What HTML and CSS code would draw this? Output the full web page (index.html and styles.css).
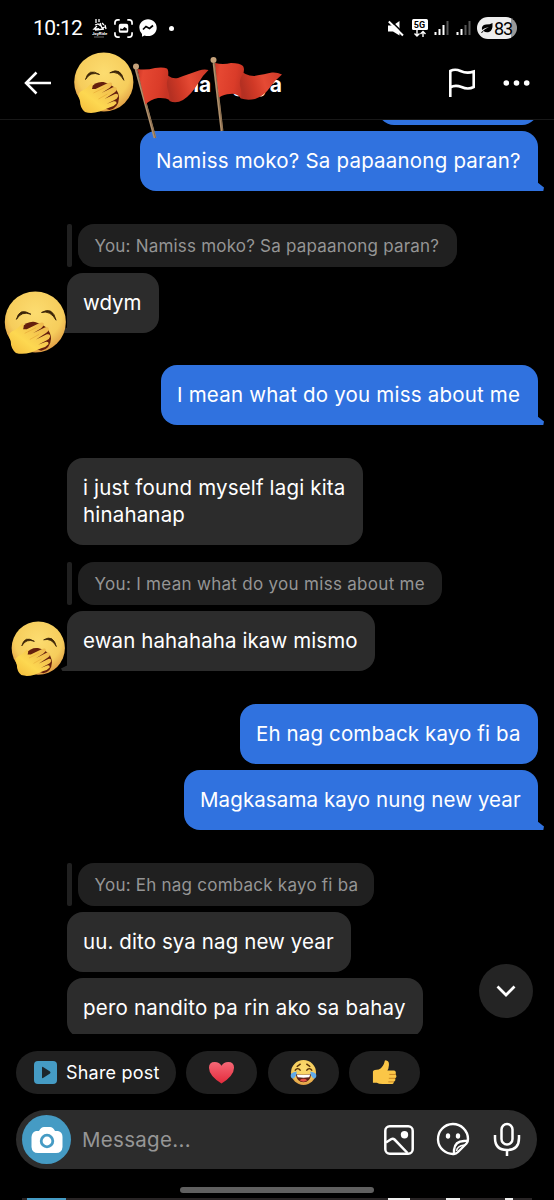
FILE: index.html
```html
<!DOCTYPE html>
<html lang="tl">
<head>
<meta charset="utf-8">
<title>Messages</title>
<link rel="stylesheet" href="styles.css">
</head>
<body>
<svg class="defs" width="0" height="0">
  <defs>
    <radialGradient id="skin" cx=".5" cy=".35" r=".68"><stop offset="0" stop-color="#fcdc70"/><stop offset=".65" stop-color="#f6cd5c"/><stop offset="1" stop-color="#dc9440"/></radialGradient>
    <linearGradient id="hand" x1="0" y1="1" x2="1" y2="0"><stop offset="0" stop-color="#f3ba3a"/><stop offset=".4" stop-color="#fdd851"/><stop offset="1" stop-color="#ecb34d"/></linearGradient>
    <linearGradient id="cloth" x2="1" y2=".2"><stop offset="0" stop-color="#c93524"/><stop offset=".2" stop-color="#e64832"/><stop offset=".75" stop-color="#da3c29"/><stop offset="1" stop-color="#c73424"/></linearGradient>
    <linearGradient id="fold" x2="1" y2="-.2"><stop offset="0" stop-color="#b53022"/><stop offset=".25" stop-color="#d03926"/><stop offset=".5" stop-color="#e54a34"/><stop offset="1" stop-color="#c93525"/></linearGradient>
    <linearGradient id="heart" x1="0" y1="0" x2="0" y2="1"><stop offset="0" stop-color="#f56876"/><stop offset="1" stop-color="#e42b3c"/></linearGradient>
    <symbol id="yawn" viewBox="0 0 60 62">
      <circle cx="30.3" cy="30" r="29.600" fill="url(#skin)"/>
      <path d="M12 27.500Q15 15.500 26 22.500Q17 19 12 27.500ZM36.300 20.800Q47 14.500 50.400 28.300Q45 18.500 36.300 20.800Z" fill="#3b2408" stroke="#3b2408" stroke-width=".9" stroke-linejoin="round"/>
      <path d="M17 36Q22 29 30 30Q45 34 45.500 46Q45 56 36 58L24 54Z" fill="#651f0d"/>
      <path d="M17.500 31.500Q20 32.500 18.500 37L22 37L34 31.300Q38 29.500 38.700 32Q38.500 34 36 36L28 41L39.500 35.300Q43 34 43.500 37Q43 39 41 40.500L31 47L41.500 42Q45 41 44.500 44.500Q44 46.500 41 48L33 52L40 49.300Q43.500 48.500 43 51.500Q41 54 36 55.500L26 59.500Q18 62 11.500 60Q6.500 56 6.500 49L5 44Q4.500 41 8 39Q13 37 17.500 31.500Z" fill="url(#hand)"/>
      <path d="M20 41L31 35.500M25 47L34 42" stroke="#e5a634" stroke-width=".6"/>
    </symbol>
  </defs>
</svg>
<div class="screen">
  <div class="status">
    <span class="clock">10:12</span>
    <svg class="joyride" viewBox="0 0 16 20"><path d="M4 1V5M7 1V4M3 7L6 6L9 8M5 8L2 11H7M8 5L10 10L13 9M10 5L12 7M3 12L12 11M13 7L14 11" fill="none" stroke="#fff" stroke-width="1.300"/><text x="0" y="17" class="ride">JoyRide</text><path d="M2 19H12" stroke="#888" stroke-width=".8"/></svg>
    <svg class="shot" viewBox="0 0 20 20"><path d="M1 6V4Q1 1 4 1H6M14 1H16Q19 1 19 4V6M19 14V16Q19 19 16 19H14M6 19H4Q1 19 1 16V14" fill="none" stroke="#fff" stroke-width="1.800"/><rect x="5" y="5" width="10" height="9.500" rx="2" fill="#fff"/><path d="M6.500 12V10L9 10.500L11 8.500L13.500 10V12Z" fill="#000"/></svg>
    <svg class="messenger" viewBox="0 0 18 18"><path d="M9 .3C4 .3.3 4 .3 8.600Q.3 12.500 3 15V17.700L5.500 16.400Q7 17 9 17C14 17 17.700 13.500 17.700 8.700S14 .3 9 .3Z" fill="#fff"/><path d="M4 10.500L7 7.500L10.500 9.500L14 6.500" fill="none" stroke="#000" stroke-width="1.700"/></svg>
    <i class="dot"></i>
    <div class="status-right">
      <svg class="mute" viewBox="0 0 16 17"><path d="M0 5.500H5L11.500 1V15.500L5 11.500H0Z" fill="#fff"/><path d="M2 0L16 14" stroke="#000" stroke-width="1.600"/><path d="M.8 1.500L15 15.500" stroke="#fff" stroke-width="2"/></svg>
      <svg class="five" viewBox="0 0 16 19"><rect width="16" height="11" rx="1.500" fill="#fff"/><text x="1.800" y="9" class="fiveg">5G</text><path d="M5 11V17M2.500 14.500L5 17L7.500 14.500M11 18V12.500M8.500 15L11 12.500L13.500 15" fill="none" stroke="#fff" stroke-width="1.400"/></svg>
      <svg class="signal" viewBox="0 0 15 16"><path d="M1.500 12V15M5.500 9V15M9.500 5V15" stroke="#fff" stroke-width="2"/><path d="M13.500 1V15" stroke="#555" stroke-width="2"/></svg>
      <svg class="signal" viewBox="0 0 15 16"><path d="M1.500 12V15M5.500 9V15" stroke="#fff" stroke-width="2"/><path d="M9.500 5V15M13.500 1V15" stroke="#555" stroke-width="2"/></svg>
      <div class="battery"><svg viewBox="0 0 12 11"><path d="M11.500 0Q12 8 8 9Q5 10 2.500 8L1 10L0 9.500Q3 6 8 4Q3 5 1 7Q0 2 5 1.500Q9 1.500 11.500 0Z"/></svg><span>83</span></div>
    </div>
  </div>
  <header class="header">
    <svg class="back" viewBox="0 0 28 24"><path d="M27 12H2M12.500 1.500L2 12L12.500 22.500" fill="none" stroke="#fff" stroke-width="2.500"/></svg>
    <span class="name">na Ngaya</span>
    <svg class="report" viewBox="0 0 28 30"><path d="M2.300 29V3Q7 .5 12.500 3Q19 6 25.700 3.500V19Q20 22 13.500 19Q7 16.500 2.300 19.500" fill="none" stroke="#fff" stroke-width="2.600"/></svg>
    <svg class="more" viewBox="0 0 28 8"><circle cx="3.300" cy="4" r="2.800"/><circle cx="13.500" cy="4" r="2.800"/><circle cx="23.700" cy="4" r="2.800"/></svg>
    <svg class="sticker yawn-head"><use href="#yawn"/></svg>
    <svg class="sticker flags" viewBox="0 0 150 84">
      <path d="M3 13L22 82" stroke="#b0906c" stroke-width="2.800"/><path d="M3.600 13L22.600 82" stroke="#7c5f42" stroke-width=".8"/><circle cx="3" cy="10.500" r="3" fill="#c5a27b"/>
      <path d="M31 14Q36 24 45 22Q58 17 66 14.500Q71 13 75.500 14Q69 20 65 27.500Q58 39 50 44Q43 48 36.500 45L32 30Z" fill="url(#fold)"/>
      <path d="M4.500 13Q13 14.500 22 12Q30 11 34 12.500Q36 14 35 22Q33 26 34.500 33Q36.500 38 36.500 44Q33 41.500 25 42Q17 43.500 12.500 48.500Z" fill="url(#cloth)"/>
      <path d="M81 7L89 75" stroke="#b0906c" stroke-width="2.800"/><path d="M81.600 7L89.600 75" stroke="#7c5f42" stroke-width=".8"/><circle cx="80.500" cy="4" r="3" fill="#c5a27b"/>
      <path d="M105 12Q112 20 121 20Q132 18 139 16.500Q144 16 149 18.500Q142 24 137 31.500Q131 40 122 43Q114 44.500 108 42.500L104 30Z" fill="url(#fold)"/>
      <path d="M82 7Q90 9 98 7Q107 7 110 10Q112 13 110 18Q106 23 107 30Q109 35 108 42.500Q104 37 97 38Q91 38 86 41.500Z" fill="url(#cloth)"/>
    </svg>
  </header>
  <main class="chat">
    <div class="bubble me previous"></div>
    <div class="bubble me last w398 m6"><span class="t1">Namiss moko? Sa papaanong paran?</span></div>
    <div class="quote w379 m33"><span class="q1">You: Namiss moko? Sa papaanong paran?</span></div>
    <div class="bubble w92 m6 end"><span class="t2">wdym</span><svg class="sticker yawn-one"><use href="#yawn"/></svg></div>
    <div class="bubble me last w377 m32"><span class="t3">I mean what do you miss about me</span></div>
    <div class="bubble tall w296 m33"><span class="t4">i just found myself lagi kita<br>hinahanap</span></div>
    <div class="quote w364 m17"><span class="q2">You: I mean what do you miss about me</span></div>
    <div class="bubble end w308 m6"><span class="t5">ewan hahahaha ikaw mismo</span><svg class="sticker yawn-two"><use href="#yawn"/></svg></div>
    <div class="bubble me w298 m33"><span class="t6">Eh nag comback kayo fi ba</span></div>
    <div class="bubble me last w354 m6"><span class="t7">Magkasama kayo nung new year</span></div>
    <div class="quote w296 m33"><span class="q3">You: Eh nag comback kayo fi ba</span></div>
    <div class="bubble w284 m6"><span class="t8">uu. dito sya nag new year</span></div>
    <div class="bubble w356 m6"><span class="t9">pero nandito pa rin ako sa bahay</span></div>
    <div class="down"><svg viewBox="0 0 20 12"><path d="M1.500 1.500L10 10L18.500 1.500" fill="none" stroke="#fff" stroke-width="2.700"/></svg></div>
  </main>
  <div class="chips">
    <div class="chip share"><svg viewBox="0 0 23 23"><rect width="23" height="23" rx="4" fill="#459bc4"/><path d="M8 6.500Q8 5.500 9 6L16 10.500Q17 11.500 16 12.500L9 17Q8 17.500 8 16.500Z" fill="#1c262c"/></svg><span>Share post</span></div>
    <div class="chip"><svg viewBox="0 0 28 28"><path d="M14 25.500Q1 17 1 9Q1 3 7 3Q12 3 14 7Q16 3 21 3Q27 3 27 9Q27 17 14 25.500Z" fill="url(#heart)"/></svg></div>
    <div class="chip"><svg viewBox="0 0 28 28"><circle cx="14" cy="14" r="13" fill="url(#skin)"/><path d="M7 8L11 5M17 5L21 8M5 12Q8 8 11 12M17 12Q20 8 23 12" fill="none" stroke="#563008" stroke-width="1.500"/><path d="M6 15.500Q14 17 22 15.500Q21 24 14 24Q7 24 6 15.500Z" fill="#612215"/><path d="M7 16Q14 17 21 16L20 19Q14 20 8 19Z" fill="#fff"/><path d="M10 22Q14 19 18 22Q14 25 10 22Z" fill="#e55246"/><path d="M7 13Q0 14 .7 18Q2 22 5 19Q7 17 7 13ZM21 13Q28 14 27.300 18Q26 22 23 19Q21 17 21 13Z" fill="#5faae9"/></svg></div>
    <div class="chip"><svg viewBox="0 0 28 28"><path d="M2 13Q3 11 8 11Q13 8 14 3Q14 .8 16 1.500Q20 2 18 10L17 12H24Q26.500 12.500 25.500 16Q27.500 18 25 20Q26 23 23.500 23.500Q24 26 21 26H12Q8 26 6 24.500H2Z" fill="#fbc647"/><path d="M19 16H25.500M18.500 20H25M18 23.700H23.500" stroke="#c98322" stroke-width="1"/></svg></div>
  </div>
  <div class="composer">
    <div class="camera"><svg viewBox="0 0 32 28"><path d="M5 5H8Q10 1 13 1H19Q22 1 24 5H27Q31.500 6 31.500 11V21Q31 27 25 27H7Q1 27 .5 21V11Q1 6 5 5Z" fill="#fff"/><circle cx="16" cy="15" r="5.800" fill="none" stroke="#459bc4" stroke-width="2.800"/></svg></div>
    <span class="placeholder">Message...</span>
    <svg class="tool" viewBox="0 0 32 32"><rect x="2.300" y="2.300" width="27.400" height="27.400" rx="4.500" fill="none" stroke="#fff" stroke-width="2.500"/><circle cx="21.500" cy="10.700" r="3.700" fill="#fff"/><path d="M3 18.500L8 15.200Q10 14 11.500 15.500L24.500 29" fill="none" stroke="#fff" stroke-width="2.500"/></svg>
    <svg class="tool wide" viewBox="0 0 34 34"><path d="M32 17A15 15 0 1 0 18 32Q20 32 22 30L30.500 21.500Q32 20 32 17ZM18 31.500V28Q19 19 28 19Q31 19 32 18" fill="none" stroke="#fff" stroke-width="2.400"/><ellipse cx="12" cy="14" rx="2.200" ry="2.700" fill="#fff"/><ellipse cx="22" cy="14" rx="2.200" ry="2.700" fill="#fff"/><path d="M20.500 29Q21 24 28.500 23" fill="none" stroke="#fff" stroke-width="1.600"/></svg>
    <svg class="mic" viewBox="0 0 28 34"><rect x="8.500" y="2" width="11" height="20.500" rx="5.500" fill="none" stroke="#fff" stroke-width="2.500"/><path d="M2 13V16Q2 28 14 28T26 16V13M14 28V34" fill="none" stroke="#fff" stroke-width="2.500"/></svg>
  </div>
  <div class="home"></div>
  <div class="edge"><i class="edge-blue"></i><i class="edge-a"></i><i class="edge-b"></i><i class="edge-c"></i></div>
</div>
</body>
</html>
```
FILE: styles.css
```css
* { box-sizing: border-box; }
body { margin: 0; background: #000; color: #fff; font-family: Inter, Roboto, sans-serif; }
svg { display: block; flex: none; }
.defs { position: absolute; }
.screen { width: 554px; height: 1200px; overflow: hidden; display: flex; flex-direction: column; }
.status { height: 56px; display: flex; align-items: center; padding-left: 33px; flex: none; }
.clock { font: 400 21px Roboto, sans-serif; width: 49px; letter-spacing: -.6px; white-space: nowrap; }
.joyride { width: 16px; height: 20px; margin-left: 10px; }
.ride { font: bold 4.2px Roboto, sans-serif; fill: #fff; }
.shot { width: 19px; height: 19px; margin-left: 6px; }
.messenger { width: 18px; height: 18px; margin-left: 6px; }
.dot { width: 5px; height: 5px; border-radius: 50%; background: #fff; margin-left: 12px; }
.status-right { display: flex; align-items: center; margin-left: auto; padding-right: 37px; }
.mute { width: 16px; height: 17px; }
.five { width: 16px; height: 19px; margin-left: 8px; }
.fiveg { font: bold 9px Roboto, sans-serif; }
.signal { width: 15px; height: 16px; margin-left: 6px; }
.signal + .signal { margin-left: 7px; }
.battery { display: flex; align-items: center; width: 40px; height: 22px; margin-left: 6px; padding-left: 4px; gap: 1px; border-radius: 11px; background: linear-gradient(90deg, #eee 34px, #999 34px); color: #000; font: 400 18px Roboto, sans-serif; letter-spacing: -1px; }
.battery svg { width: 12px; height: 11px; }
.header { position: relative; z-index: 2; height: 64px; flex: none; display: flex; align-items: center; border-bottom: 1px solid #181818; padding: 0 23px 9px 24px; }
.back { width: 28px; height: 24px; }
.name { margin-left: 126px; width: 104px; display: flex; justify-content: flex-end; font-size: 21px; font-weight: 700; white-space: nowrap; padding-top: 3px; }
.report { width: 28px; height: 30px; margin-left: auto; margin-right: 27px; }
.more { width: 28px; height: 8px; fill: #fff; }
.sticker { position: absolute; }
.yawn-head { left: 73px; top: -4px; width: 61px; height: 62px; }
.flags { left: 133px; top: 0; width: 150px; height: 84px; }
.chat { position: relative; height: 914px; flex: none; display: flex; flex-direction: column; align-items: flex-start; overflow: hidden; padding-left: 67px; }
.bubble { position: relative; height: 60px; flex: none; padding: 0 0 1px 16px; border-radius: 16px; background: #2c2c2c; display: flex; align-items: center; font-size: 20.5px; line-height: 27px; white-space: nowrap; }
.me { align-self: flex-end; margin-right: 16px; background: #3072df; }
.previous { width: 160px; margin-top: -55px; }
.tall { height: 87px; padding-bottom: 2px; }
.last { border-bottom-right-radius: 0; }
.last::after { content: ""; position: absolute; right: -6px; bottom: 0; width: 7px; height: 9px; background: #3072df; clip-path: polygon(0 0, 100% 60%, 90% 100%, 0 100%); }
.end { border-bottom-left-radius: 0; }
.end::after { content: ""; position: absolute; left: -6px; bottom: 0; width: 7px; height: 6px; background: #2c2c2c; clip-path: polygon(100% 0, 0 60%, 20% 100%, 100% 100%); }
.quote { position: relative; height: 43px; flex: none; margin-left: 11px; padding-left: 16.5px; display: flex; align-items: center; border-radius: 16px; background: #202020; color: #959595; font-size: 17px; white-space: nowrap; }
.quote::before { content: ""; position: absolute; left: -11px; top: 0; width: 5px; height: 43px; border-radius: 2px; background: #202020; }
.m6 { margin-top: 6px; } .m17 { margin-top: 17px; } .m32 { margin-top: 32px; } .m33 { margin-top: 33px; }
.w92 { width: 92px; } .w284 { width: 284px; } .w296 { width: 296px; } .w298 { width: 298px; } .w308 { width: 308px; } .w354 { width: 354px; } .w356 { width: 356px; } .w364 { width: 364px; } .w377 { width: 377px; } .w379 { width: 379px; } .w398 { width: 398px; }
.t1, .t3, .t9 { letter-spacing: .2px; }
.t4 { letter-spacing: .17px; }
.t5, .t7, .t8 { letter-spacing: .1px; }
.t6 { letter-spacing: .13px; }
.q1 { letter-spacing: .2px; } .q2 { letter-spacing: .3px; } .q3 { letter-spacing: .23px; }
.yawn-one { left: -63px; top: 18px; width: 62px; height: 64px; z-index: 1; }
.yawn-two { left: -56px; top: 10px; width: 54px; height: 56px; z-index: 1; }
.down { position: absolute; right: 21.5px; top: 844px; width: 54px; height: 54px; border-radius: 50%; background: #242424; display: grid; place-items: center; }
.down svg { width: 20px; height: 12px; }
.chips { display: flex; flex: none; gap: 10.4px; padding: 0 16px; margin-top: 17px; height: 43px; }
.chip { width: 71px; height: 43px; border-radius: 22px; background: #202020; display: flex; align-items: center; justify-content: center; }
.chip svg { width: 27px; height: 27px; }
.chip.share { width: 160px; justify-content: flex-start; padding-left: 18px; font-size: 18px; white-space: nowrap; gap: 9px; letter-spacing: .2px; }
.chip.share svg { width: 23px; height: 23px; }
.composer { margin: 16px 17px 0 16px; height: 59px; flex: none; border-radius: 30px; background: #2c2c2c; display: flex; align-items: center; padding-left: 6px; padding-right: 16px; }
.camera { width: 49px; height: 49px; border-radius: 50%; background: #459bc4; display: grid; place-items: center; }
.camera svg { width: 32px; height: 28px; }
.placeholder { font-size: 20.5px; color: #969696; margin-left: 11px; margin-right: auto; letter-spacing: .3px; }
.tool { width: 32px; height: 32px; }
.wide { width: 34px; height: 34px; margin-left: 21px; }
.mic { width: 28px; height: 34px; margin-left: 23px; }
.wide, .mic { margin-bottom: 1px; }
.home { width: 194px; height: 6px; flex: none; border-radius: 3px; margin: 18px 0 0 180px; background: #606060; }
.edge { height: 2px; margin: 5px 22px 0; flex: none; background: #292526; display: flex; }
.edge i { height: 2px; background: #eee; }
.edge .edge-blue { width: 39px; margin-left: 5px; background: #459bc4; }
.edge-a { width: 22px; margin-left: 322px; } .edge-b { width: 14px; margin-left: 36px; } .edge-c { width: 8px; margin-left: 45px; }
```
